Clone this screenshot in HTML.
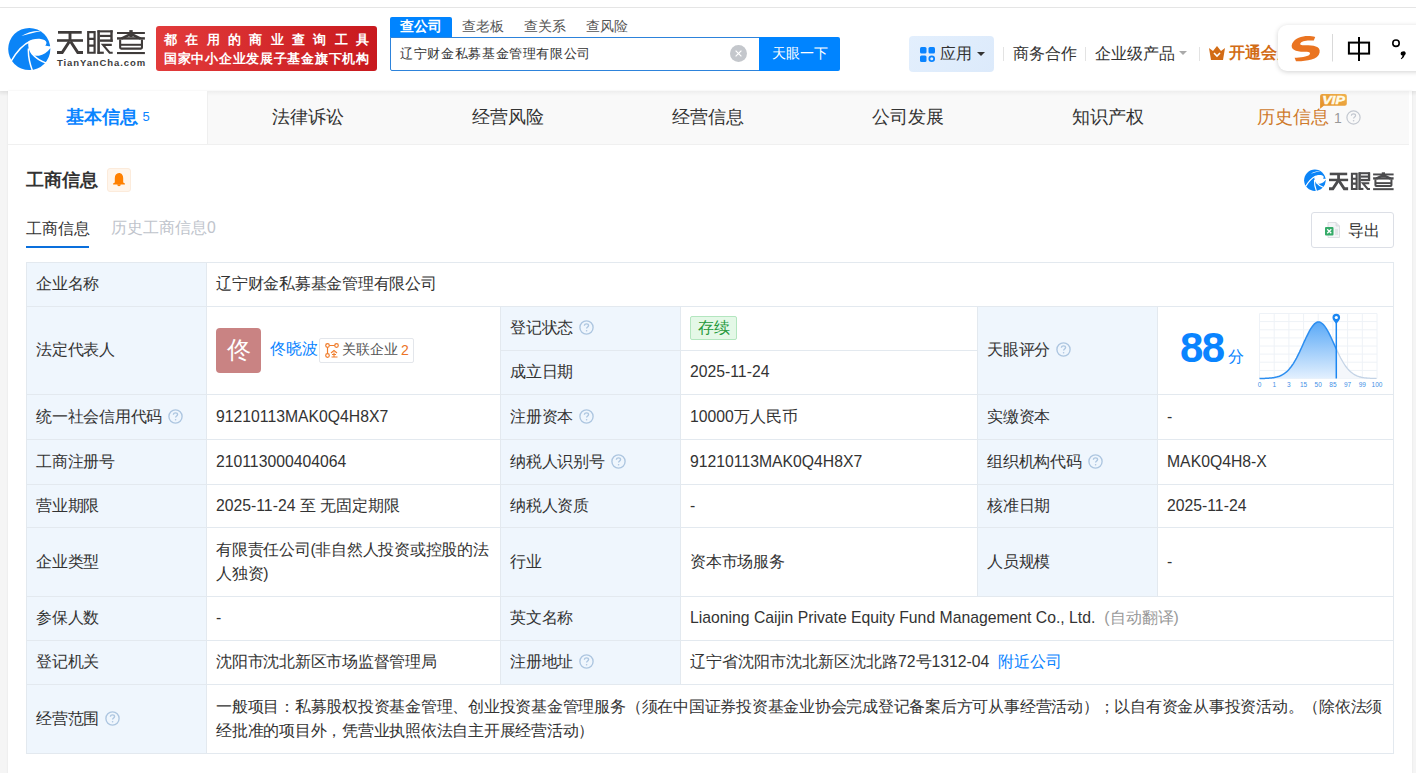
<!DOCTYPE html>
<html><head><meta charset="utf-8">
<style>
*{margin:0;padding:0;box-sizing:border-box}
html,body{width:1416px;height:773px;overflow:hidden;background:#f5f5f5;font-family:"Liberation Sans",sans-serif;color:#333}
.a{position:absolute;white-space:nowrap}
#top{position:absolute;left:0;top:0;width:1416px;height:7px;background:#fff}
#topline{position:absolute;left:0;top:7px;width:1416px;height:1px;background:#e6e6e6}
#hdr{position:absolute;left:0;top:8px;width:1416px;height:83px;background:#fff;box-shadow:0 2px 4px rgba(0,0,0,.05)}
#main{position:absolute;left:8px;top:91px;width:1404px;height:700px;background:#fff;box-shadow:0 0 2px rgba(0,0,0,.08)}
#tabs{position:absolute;left:8px;top:91px;width:1401px;height:54px;background:#f9f9f9;border-bottom:1px solid #f0f0f0}
.tab{position:absolute;top:91px;height:53px;width:200px;text-align:center;line-height:53px;font-size:18px;color:#333}
.q{display:inline-block;width:14px;height:14px;border:1.3px solid #bcd0e4;border-radius:50%;font-size:10px;line-height:11px;text-align:center;color:#bcd0e4;font-weight:bold;vertical-align:middle}
/* table */
.ln{position:absolute;background:#e3e9ef}
.lab{position:absolute;background:#eff6fd}
.t{position:absolute;font-size:15.75px;color:#333;white-space:nowrap;line-height:20px}
.c{position:absolute;display:flex;align-items:center;padding-left:9px;font-size:15.75px;color:#333;white-space:nowrap;line-height:24.5px}
.qi{display:inline-block;width:15px;height:15px;margin-left:6px;vertical-align:middle;position:relative;top:-1px}
</style></head><body>
<div id="top"></div><div id="topline"></div>
<div id="hdr"></div>
<div id="main"></div>
<div id="tabs"></div>
<div class="a" style="left:0;top:91px;width:1416px;height:5px;background:linear-gradient(rgba(0,0,0,.045),rgba(0,0,0,0))"></div>
<!-- HEADER -->
<svg class="a" style="left:8px;top:27px" width="43" height="44" viewBox="0 0 100 102"><circle cx="49.5" cy="51" r="49" fill="#0b84f7"/>
<path d="M47 34 C52 29 64 26.5 76 27.5 C84 28.5 90 32 89.5 37 C89.2 39.5 88 41.5 86.5 43 C90 44 95 45 106 45 L106 49 L98.5 49.5 C92 58 82 66 72 66.5 C64 67 58 65.5 55.5 63 C50 58 46.5 50 47 34 Z" fill="#fff"/>
<path d="M31 21 C44 13 60 8.5 76 9.5 C60 12.5 46 16.5 31 21Z" fill="#fff"/>
<path d="M7 80 C19 59 33 41 53 32.5" stroke="#fff" stroke-width="3.4" fill="none"/>
<path d="M47.5 50 C46.5 68 50 84 57 102" stroke="#fff" stroke-width="3.4" fill="none"/>
<path d="M55 61 C64 72 76 80 92 85" stroke="#fff" stroke-width="3.6" fill="none"/></svg>
<svg class="a" style="left:0;top:0" width="160" height="60" viewBox="0 0 160 60"><g fill="none" stroke="#3f3b3a" stroke-linejoin="miter">
<path d="M58 32.35H81.75" stroke-width="2.7"/>
<path d="M70 33V40" stroke-width="2.9"/>
<path d="M57 40.5H83" stroke-width="2.6"/>
<path d="M69.4 41.5L62.2 52.45H57" stroke-width="3"/>
<path d="M70.6 41.5L77.8 52.45H83" stroke-width="3"/>
<path d="M88.2 32.05H94.6V52.75H88.2Z" stroke-width="2.2"/>
<path d="M88.2 38.8H94.6M88.2 45.55H94.6" stroke-width="2.2"/>
<path d="M98.6 53.85V30.3" stroke-width="2.6"/>
<path d="M97.5 31.35H112.7" stroke-width="2.1"/>
<path d="M111.5 30.3V41.8" stroke-width="2.4"/>
<path d="M99.9 35.95H111.5" stroke-width="2.2"/>
<path d="M99.9 40.6H112.7" stroke-width="2.4"/>
<path d="M97.5 52.75H103.8" stroke-width="2.2"/>
<path d="M111.8 44.85H103L109.6 52.75H112.7" stroke-width="2.1"/>
<path d="M117 33H144.9" stroke-width="2"/>
<path d="M131 30.1V37" stroke-width="3.4"/>
<path d="M121.3 38.6L131 34L140.7 38.6" stroke-width="2.6"/>
<path d="M117 38.4H144.9" stroke-width="2.4"/>
<path d="M120.15 39.6V47.6Q120.15 48.65 121.2 48.65H140.9Q141.95 48.65 141.95 47.6V39.6" stroke-width="2.1"/>
<path d="M120.15 44.8H141.95" stroke-width="2"/>
<path d="M117 53.05H144.9" stroke-width="2.1"/>
</g></svg>
<div class="a" style="left:57px;top:57px;font-size:9.5px;font-weight:bold;color:#3d3d3d;letter-spacing:0.9px;line-height:12px">TianYanCha.com</div>
<div class="a" style="left:156px;top:26px;width:221px;height:45px;border-radius:3px;background:linear-gradient(90deg,#e23b3b,#c8191e)"></div>
<div class="a" style="left:164px;top:31px;font-size:13px;font-weight:bold;color:#fff;letter-spacing:8.35px;line-height:17px">都在用的商业查询工具</div>
<div class="a" style="left:164px;top:50px;font-size:13px;font-weight:bold;color:#fff;letter-spacing:0.72px;line-height:17px">国家中小企业发展子基金旗下机构</div>
<!-- search -->
<div class="a" style="left:390px;top:17px;width:62px;height:21px;background:#0084ff;border-radius:2px 2px 0 0"></div>
<div class="a" style="left:390px;top:16px;width:62px;height:20px;line-height:20px;text-align:center;font-size:14px;font-weight:bold;color:#fff">查公司</div>
<div class="a" style="left:462px;top:16px;line-height:20px;font-size:14px;color:#555">查老板</div>
<div class="a" style="left:524px;top:16px;line-height:20px;font-size:14px;color:#555">查关系</div>
<div class="a" style="left:586px;top:16px;line-height:20px;font-size:14px;color:#555">查风险</div>
<div class="a" style="left:390px;top:37px;width:370px;height:34px;border:1px solid #2d83db;border-radius:0 0 0 2px;background:#fff"></div>
<div class="a" style="left:400px;top:44px;line-height:20px;font-size:13px;letter-spacing:0.65px;color:#333">辽宁财金私募基金管理有限公司</div>
<svg class="a" style="left:729.5px;top:45px" width="17" height="17" viewBox="0 0 17 17"><circle cx="8.5" cy="8.5" r="8.5" fill="#c4c7cc"/><path d="M5.6 5.6L11.4 11.4M11.4 5.6L5.6 11.4" stroke="#fff" stroke-width="1.2"/></svg>
<div class="a" style="left:759px;top:37px;width:81px;height:34px;background:#0084ff;border-radius:0 2px 2px 0;color:#fff;font-size:14px;line-height:32px;text-align:center">天眼一下</div>
<!-- right nav -->
<div class="a" style="left:909px;top:36px;width:85px;height:36px;border-radius:4px;background:linear-gradient(135deg,#e3effd,#dceafb)"></div>
<svg class="a" style="left:919.5px;top:46.5px" width="16" height="16" viewBox="0 0 16 16"><rect x="0" y="0" width="6.5" height="6.5" rx="1.5" fill="#0a84ff"/><rect x="8.5" y="0" width="6.5" height="6.5" rx="1.5" fill="#0a84ff"/><rect x="0" y="8.5" width="6.5" height="6.5" rx="1.5" fill="#0a84ff"/><circle cx="11.75" cy="11.75" r="2.4" stroke="#0a84ff" stroke-width="1.8" fill="none"/></svg>
<div class="a" style="left:940px;top:44px;line-height:20px;font-size:16px;color:#333">应用</div>
<svg class="a" style="left:977px;top:52px" width="8" height="4" viewBox="0 0 8 4"><path d="M0 0H8L4 4Z" fill="#333"/></svg>
<div class="a" style="left:1003px;top:47px;width:1px;height:14px;background:#e3e3e3"></div>
<div class="a" style="left:1013px;top:44px;line-height:20px;font-size:15.75px;color:#333">商务合作</div>
<div class="a" style="left:1085px;top:47px;width:1px;height:14px;background:#e3e3e3"></div>
<div class="a" style="left:1095px;top:44px;line-height:20px;font-size:15.75px;color:#333">企业级产品</div>
<svg class="a" style="left:1179px;top:51px" width="8" height="4" viewBox="0 0 8 4"><path d="M0 0H8L4 4Z" fill="#aaa"/></svg>
<div class="a" style="left:1199px;top:47px;width:1px;height:14px;background:#e3e3e3"></div>
<svg class="a" style="left:1209px;top:46px" width="16" height="14" viewBox="0 0 16 14"><path d="M0 2L4 5L8 0L12 5L16 2L14 14H2Z" fill="#d26c16"/><path d="M5 7L8 10L11 7" stroke="#fff" stroke-width="1.6" fill="none"/></svg>
<div class="a" style="left:1229px;top:43px;line-height:20px;font-size:16px;font-weight:bold;color:#d26c16">开通会员</div>
<!-- IME -->
<div class="a" style="left:1278px;top:25px;width:160px;height:46px;border-radius:9px;background:#fff;box-shadow:0 1px 5px rgba(0,0,0,.18)"></div>
<svg class="a" style="left:1280px;top:26px" width="136" height="44" viewBox="1280 26 136 44">
<path d="M1314.5 12.5" fill="none"/>
<path d="M1315.2 37C1308 34.8 1296 35.8 1292.2 43.5C1289.8 49.2 1295.5 51.8 1304 51.8C1309 51.8 1311 52.5 1309.6 54.4C1307.2 57 1300 57.4 1294.6 57.7L1296 61.2C1305 61.4 1318.3 60.2 1319.6 52.5C1320.8 45.8 1313 45.2 1305.5 45.2C1300.5 45.2 1299.5 44.4 1300.6 42.9C1302.5 40.8 1308 40.4 1313.8 40.6Z" fill="#ea7421"/>
<path d="M1332.5 34V61.5" stroke="#d9d9d9" stroke-width="1"/>
<rect x="1348.9" y="42.6" width="20.2" height="11" stroke="#000" stroke-width="2" fill="none"/>
<path d="M1359 37V61" stroke="#000" stroke-width="2"/>
<circle cx="1396" cy="43.2" r="3.2" stroke="#000" stroke-width="1.6" fill="none"/>
<path d="M1402.8 51.5A2 2 0 1 1 1404.6 55.2C1404 57 1402.8 58.5 1401.2 59.3L1400.8 58.6C1401.8 57.8 1402.4 56.8 1402.5 55.6A2 2 0 0 1 1402.8 51.5Z" fill="#000"/>
</svg>

<!-- TABS -->
<div class="a" style="left:8px;top:91px;width:199px;height:53px;background:#fff"></div>
<div class="a" style="left:207px;top:91px;width:1px;height:53px;background:#efefef"></div>
<div class="tab a" style="left:8px;color:#0a84ff;font-weight:bold">基本信息<span style="font-size:13px;font-weight:normal;margin-left:4px;position:relative;top:-2px">5</span></div>
<div class="tab a" style="left:208px">法律诉讼</div>
<div class="tab a" style="left:408px">经营风险</div>
<div class="tab a" style="left:608px">经营信息</div>
<div class="tab a" style="left:808px">公司发展</div>
<div class="tab a" style="left:1008px">知识产权</div>
<div class="a" style="left:1257px;top:91px;height:53px;line-height:53px;font-size:18px;color:#cf7a2c">历史信息<span style="font-size:14px;color:#999;margin-left:5px">1</span></div>
<svg class="a" style="left:1346px;top:110px" width="15" height="15" viewBox="0 0 15 15"><circle cx="7.5" cy="7.5" r="6.6" stroke="#c3c8d0" stroke-width="1.2" fill="none"/><path d="M5.4 5.8C5.4 4.5 6.4 3.8 7.5 3.8C8.7 3.8 9.6 4.6 9.6 5.6C9.6 6.9 7.6 7.1 7.6 8.6" stroke="#c3c8d0" stroke-width="1.2" fill="none"/><circle cx="7.6" cy="10.8" r="0.8" fill="#c3c8d0"/></svg>
<svg class="a" style="left:1316px;top:92px" width="34" height="19" viewBox="1316 92 34 19"><defs><linearGradient id="vg" x1="0" y1="1" x2="1" y2="0"><stop offset="0" stop-color="#e48f22"/><stop offset="1" stop-color="#efb04e"/></linearGradient></defs><path d="M1322.2 94H1344.7A2.1 2.1 0 0 1 1346.8 96.1V103.7A2.1 2.1 0 0 1 1344.7 105.8H1323.8L1320.1 108.7V96.1A2.1 2.1 0 0 1 1322.2 94Z" fill="url(#vg)"/><text x="1322.2" y="104.2" textLength="22.6" lengthAdjust="spacingAndGlyphs" font-family="Liberation Sans" font-weight="bold" font-style="italic" font-size="11" fill="#fffbe8" stroke="#fffbe8" stroke-width="0.45">VIP</text></svg>
<!-- CONTENT -->
<div class="a" style="left:26px;top:168px;line-height:24px;font-size:18px;font-weight:bold;color:#333">工商信息</div>
<div class="a" style="left:107px;top:168px;width:24px;height:24px;border-radius:3px;background:#fff5eb;border:1px solid #fcebdb"></div>
<svg class="a" style="left:112px;top:172px" width="14" height="16" viewBox="0 0 14 16"><path d="M7 1C4.4 1 2.8 3.2 2.8 6.2V10.6L1.1 11.4V12.5H12.9V11.4L11.2 10.6V6.2C11.2 3.2 9.6 1 7 1Z" fill="#ff8000"/><path d="M5.2 12.3A1.8 1.9 0 0 0 8.8 12.3Z" fill="#ff8000"/></svg>
<div class="a" style="left:26px;top:219px;line-height:20px;font-size:15.75px;color:#333">工商信息</div>
<div class="a" style="left:26px;top:246px;width:63px;height:2px;background:#0a6fdc"></div>
<div class="a" style="left:111px;top:218px;line-height:20px;font-size:15.75px;color:#c0c4cc">历史工商信息0</div>
<svg class="a" style="left:1304px;top:169px" width="22" height="22.5" viewBox="0 0 100 102"><circle cx="49.5" cy="51" r="49" fill="#0b84f7"/>
<path d="M47 34 C52 29 64 26.5 76 27.5 C84 28.5 90 32 89.5 37 C89.2 39.5 88 41.5 86.5 43 C90 44 95 45 106 45 L106 49 L98.5 49.5 C92 58 82 66 72 66.5 C64 67 58 65.5 55.5 63 C50 58 46.5 50 47 34 Z" fill="#fff"/>
<path d="M31 21 C44 13 60 8.5 76 9.5 C60 12.5 46 16.5 31 21Z" fill="#fff"/>
<path d="M7 80 C19 59 33 41 53 32.5" stroke="#fff" stroke-width="5" fill="none"/>
<path d="M47.5 50 C46.5 68 50 84 57 102" stroke="#fff" stroke-width="5" fill="none"/>
<path d="M55 61 C64 72 76 80 92 85" stroke="#fff" stroke-width="5.2" fill="none"/></svg>
<svg class="a" style="left:0;top:0;overflow:visible" width="1416" height="200"><g transform="translate(1287.11 150.18) scale(0.735)"><g fill="none" stroke="#4b4b4d" stroke-linejoin="miter">
<path d="M58 32.35H81.75" stroke-width="3.51"/>
<path d="M70 33V40" stroke-width="3.77"/>
<path d="M57 40.5H83" stroke-width="3.38"/>
<path d="M69.4 41.5L62.2 52.45H57" stroke-width="3.90"/>
<path d="M70.6 41.5L77.8 52.45H83" stroke-width="3.90"/>
<path d="M88.2 32.05H94.6V52.75H88.2Z" stroke-width="2.86"/>
<path d="M88.2 38.8H94.6M88.2 45.55H94.6" stroke-width="2.86"/>
<path d="M98.6 53.85V30.3" stroke-width="3.38"/>
<path d="M97.5 31.35H112.7" stroke-width="2.73"/>
<path d="M111.5 30.3V41.8" stroke-width="3.12"/>
<path d="M99.9 35.95H111.5" stroke-width="2.86"/>
<path d="M99.9 40.6H112.7" stroke-width="3.12"/>
<path d="M97.5 52.75H103.8" stroke-width="2.86"/>
<path d="M111.8 44.85H103L109.6 52.75H112.7" stroke-width="2.73"/>
<path d="M117 33H144.9" stroke-width="2.60"/>
<path d="M131 30.1V37" stroke-width="4.42"/>
<path d="M121.3 38.6L131 34L140.7 38.6" stroke-width="3.38"/>
<path d="M117 38.4H144.9" stroke-width="3.12"/>
<path d="M120.15 39.6V47.6Q120.15 48.65 121.2 48.65H140.9Q141.95 48.65 141.95 47.6V39.6" stroke-width="2.73"/>
<path d="M120.15 44.8H141.95" stroke-width="2.60"/>
<path d="M117 53.05H144.9" stroke-width="2.73"/>
</g></g></svg>
<div class="a" style="left:1311px;top:212px;width:83px;height:36px;border:1px solid #dcdfe6;border-radius:3px;background:#fff"></div>
<svg class="a" style="left:1325px;top:222px" width="16" height="16" viewBox="0 0 16 16"><path d="M3 0.5H11L14.5 4V15.5H3Z" fill="#f4f5f7" stroke="#d5d8dd" stroke-width="0.8"/><path d="M11 0.5V4H14.5" fill="#e3e6ea" stroke="#d5d8dd" stroke-width="0.8"/><rect x="0" y="5" width="8.5" height="8.5" rx="1" fill="#35ab68"/><path d="M2.2 7.2L6.3 11.3M6.3 7.2L2.2 11.3" stroke="#fff" stroke-width="1.3"/><path d="M10 8H13M10 10H13M10 12H13" stroke="#c9ccd1" stroke-width="0.8"/></svg>
<div class="a" style="left:1348px;top:221px;line-height:20px;font-size:15.75px;color:#333">导出</div>
<div class="lab" style="left:26px;top:262px;width:180px;height:491px"></div>
<div class="lab" style="left:500px;top:306px;width:180px;height:378px"></div>
<div class="lab" style="left:977px;top:306px;width:180px;height:290px"></div>
<div class="ln" style="left:26px;top:262px;width:1368px;height:1px"></div>
<div class="ln" style="left:26px;top:306px;width:1368px;height:1px"></div>
<div class="ln" style="left:26px;top:394px;width:1368px;height:1px"></div>
<div class="ln" style="left:26px;top:439px;width:1368px;height:1px"></div>
<div class="ln" style="left:26px;top:484px;width:1368px;height:1px"></div>
<div class="ln" style="left:26px;top:527px;width:1368px;height:1px"></div>
<div class="ln" style="left:26px;top:596px;width:1368px;height:1px"></div>
<div class="ln" style="left:26px;top:640px;width:1368px;height:1px"></div>
<div class="ln" style="left:26px;top:684px;width:1368px;height:1px"></div>
<div class="ln" style="left:26px;top:753px;width:1368px;height:1px"></div>
<div class="ln" style="left:500px;top:350px;width:477px;height:1px"></div>
<div class="ln" style="left:26px;top:262px;width:1px;height:492px"></div>
<div class="ln" style="left:206px;top:262px;width:1px;height:492px"></div>
<div class="ln" style="left:1393px;top:262px;width:1px;height:492px"></div>
<div class="ln" style="left:500px;top:306px;width:1px;height:378px"></div>
<div class="ln" style="left:680px;top:306px;width:1px;height:378px"></div>
<div class="ln" style="left:977px;top:306px;width:1px;height:290px"></div>
<div class="ln" style="left:1157px;top:306px;width:1px;height:290px"></div>
<div class="c" style="left:27px;top:263px;width:179px;height:43px;letter-spacing:-0.25px">企业名称</div>
<div class="c" style="left:207px;top:263px;width:1186px;height:43px;letter-spacing:-0.25px">辽宁财金私募基金管理有限公司</div>
<div class="c" style="left:27px;top:307px;width:179px;height:87px;letter-spacing:-0.25px">法定代表人</div>
<div class="c" style="left:501px;top:307px;width:179px;height:43px;letter-spacing:-0.25px">登记状态<svg class="qi" viewBox="0 0 15 15"><circle cx="7.5" cy="7.5" r="6.6" stroke="#adc6e0" stroke-width="1.35" fill="none"/><path d="M5.4 5.8C5.4 4.5 6.4 3.8 7.5 3.8C8.7 3.8 9.6 4.6 9.6 5.6C9.6 6.9 7.6 7.1 7.6 8.6" stroke="#adc6e0" stroke-width="1.35" fill="none"/><circle cx="7.6" cy="10.8" r="0.8" fill="#adc6e0"/></svg></div>
<div class="c" style="left:501px;top:351px;width:179px;height:43px;letter-spacing:-0.25px">成立日期</div>
<div class="c" style="left:681px;top:351px;width:296px;height:43px;">2025-11-24</div>
<div class="c" style="left:978px;top:307px;width:179px;height:87px;letter-spacing:-0.25px">天眼评分<svg class="qi" viewBox="0 0 15 15"><circle cx="7.5" cy="7.5" r="6.6" stroke="#adc6e0" stroke-width="1.35" fill="none"/><path d="M5.4 5.8C5.4 4.5 6.4 3.8 7.5 3.8C8.7 3.8 9.6 4.6 9.6 5.6C9.6 6.9 7.6 7.1 7.6 8.6" stroke="#adc6e0" stroke-width="1.35" fill="none"/><circle cx="7.6" cy="10.8" r="0.8" fill="#adc6e0"/></svg></div>
<div class="c" style="left:27px;top:395px;width:179px;height:44px;letter-spacing:-0.25px">统一社会信用代码<svg class="qi" viewBox="0 0 15 15"><circle cx="7.5" cy="7.5" r="6.6" stroke="#adc6e0" stroke-width="1.35" fill="none"/><path d="M5.4 5.8C5.4 4.5 6.4 3.8 7.5 3.8C8.7 3.8 9.6 4.6 9.6 5.6C9.6 6.9 7.6 7.1 7.6 8.6" stroke="#adc6e0" stroke-width="1.35" fill="none"/><circle cx="7.6" cy="10.8" r="0.8" fill="#adc6e0"/></svg></div>
<div class="c" style="left:207px;top:395px;width:293px;height:44px;">91210113MAK0Q4H8X7</div>
<div class="c" style="left:501px;top:395px;width:179px;height:44px;letter-spacing:-0.25px">注册资本<svg class="qi" viewBox="0 0 15 15"><circle cx="7.5" cy="7.5" r="6.6" stroke="#adc6e0" stroke-width="1.35" fill="none"/><path d="M5.4 5.8C5.4 4.5 6.4 3.8 7.5 3.8C8.7 3.8 9.6 4.6 9.6 5.6C9.6 6.9 7.6 7.1 7.6 8.6" stroke="#adc6e0" stroke-width="1.35" fill="none"/><circle cx="7.6" cy="10.8" r="0.8" fill="#adc6e0"/></svg></div>
<div class="c" style="left:681px;top:395px;width:296px;height:44px;">10000万人民币</div>
<div class="c" style="left:978px;top:395px;width:179px;height:44px;letter-spacing:-0.25px">实缴资本</div>
<div class="c" style="left:1158px;top:395px;width:235px;height:44px;">-</div>
<div class="c" style="left:27px;top:440px;width:179px;height:44px;letter-spacing:-0.25px">工商注册号</div>
<div class="c" style="left:207px;top:440px;width:293px;height:44px;">210113000404064</div>
<div class="c" style="left:501px;top:440px;width:179px;height:44px;letter-spacing:-0.25px">纳税人识别号<svg class="qi" viewBox="0 0 15 15"><circle cx="7.5" cy="7.5" r="6.6" stroke="#adc6e0" stroke-width="1.35" fill="none"/><path d="M5.4 5.8C5.4 4.5 6.4 3.8 7.5 3.8C8.7 3.8 9.6 4.6 9.6 5.6C9.6 6.9 7.6 7.1 7.6 8.6" stroke="#adc6e0" stroke-width="1.35" fill="none"/><circle cx="7.6" cy="10.8" r="0.8" fill="#adc6e0"/></svg></div>
<div class="c" style="left:681px;top:440px;width:296px;height:44px;">91210113MAK0Q4H8X7</div>
<div class="c" style="left:978px;top:440px;width:179px;height:44px;letter-spacing:-0.25px">组织机构代码<svg class="qi" viewBox="0 0 15 15"><circle cx="7.5" cy="7.5" r="6.6" stroke="#adc6e0" stroke-width="1.35" fill="none"/><path d="M5.4 5.8C5.4 4.5 6.4 3.8 7.5 3.8C8.7 3.8 9.6 4.6 9.6 5.6C9.6 6.9 7.6 7.1 7.6 8.6" stroke="#adc6e0" stroke-width="1.35" fill="none"/><circle cx="7.6" cy="10.8" r="0.8" fill="#adc6e0"/></svg></div>
<div class="c" style="left:1158px;top:440px;width:235px;height:44px;">MAK0Q4H8-X</div>
<div class="c" style="left:27px;top:485px;width:179px;height:42px;letter-spacing:-0.25px">营业期限</div>
<div class="c" style="left:207px;top:485px;width:293px;height:42px;">2025-11-24 至 无固定期限</div>
<div class="c" style="left:501px;top:485px;width:179px;height:42px;letter-spacing:-0.25px">纳税人资质</div>
<div class="c" style="left:681px;top:485px;width:296px;height:42px;">-</div>
<div class="c" style="left:978px;top:485px;width:179px;height:42px;letter-spacing:-0.25px">核准日期</div>
<div class="c" style="left:1158px;top:485px;width:235px;height:42px;">2025-11-24</div>
<div class="c" style="left:27px;top:528px;width:179px;height:68px;letter-spacing:-0.25px">企业类型</div>
<div class="c" style="left:207px;top:528px;width:293px;height:68px;letter-spacing:-0.25px">有限责任公司(非自然人投资或控股的法<br>人独资)</div>
<div class="c" style="left:501px;top:528px;width:179px;height:68px;letter-spacing:-0.25px">行业</div>
<div class="c" style="left:681px;top:528px;width:296px;height:68px;letter-spacing:-0.25px">资本市场服务</div>
<div class="c" style="left:978px;top:528px;width:179px;height:68px;letter-spacing:-0.25px">人员规模</div>
<div class="c" style="left:1158px;top:528px;width:235px;height:68px;">-</div>
<div class="c" style="left:27px;top:597px;width:179px;height:43px;letter-spacing:-0.25px">参保人数</div>
<div class="c" style="left:207px;top:597px;width:293px;height:43px;">-</div>
<div class="c" style="left:501px;top:597px;width:179px;height:43px;letter-spacing:-0.25px">英文名称</div>
<div class="c" style="left:681px;top:597px;width:712px;height:43px;">Liaoning Caijin Private Equity Fund Management Co., Ltd.<span style="color:#999;margin-left:9px">(自动翻译)</span></div>
<div class="c" style="left:27px;top:641px;width:179px;height:43px;letter-spacing:-0.25px">登记机关</div>
<div class="c" style="left:207px;top:641px;width:293px;height:43px;letter-spacing:-0.25px">沈阳市沈北新区市场监督管理局</div>
<div class="c" style="left:501px;top:641px;width:179px;height:43px;letter-spacing:-0.25px">注册地址<svg class="qi" viewBox="0 0 15 15"><circle cx="7.5" cy="7.5" r="6.6" stroke="#adc6e0" stroke-width="1.35" fill="none"/><path d="M5.4 5.8C5.4 4.5 6.4 3.8 7.5 3.8C8.7 3.8 9.6 4.6 9.6 5.6C9.6 6.9 7.6 7.1 7.6 8.6" stroke="#adc6e0" stroke-width="1.35" fill="none"/><circle cx="7.6" cy="10.8" r="0.8" fill="#adc6e0"/></svg></div>
<div class="c" style="left:681px;top:641px;width:712px;height:43px;">辽宁省沈阳市沈北新区沈北路72号1312-04<span style="color:#0a84ff;margin-left:9px">附近公司</span></div>
<div class="c" style="left:27px;top:685px;width:179px;height:68px;letter-spacing:-0.25px">经营范围<svg class="qi" viewBox="0 0 15 15"><circle cx="7.5" cy="7.5" r="6.6" stroke="#adc6e0" stroke-width="1.35" fill="none"/><path d="M5.4 5.8C5.4 4.5 6.4 3.8 7.5 3.8C8.7 3.8 9.6 4.6 9.6 5.6C9.6 6.9 7.6 7.1 7.6 8.6" stroke="#adc6e0" stroke-width="1.35" fill="none"/><circle cx="7.6" cy="10.8" r="0.8" fill="#adc6e0"/></svg></div>
<div class="c" style="left:207px;top:685px;width:1186px;height:68px;letter-spacing:-0.24px"><div>一般项目：私募股权投资基金管理、创业投资基金管理服务（须在中国证券投资基金业协会完成登记备案后方可从事经营活动）；以自有资金从事投资活动。（除依法须<br>经批准的项目外，凭营业执照依法自主开展经营活动）</div></div>
<div class="a" style="left:216px;top:328px;width:45px;height:45px;border-radius:4px;background:#c98383;color:#fff;font-size:24px;line-height:44px;text-align:center">佟</div>
<div class="a" style="left:270px;top:339px;line-height:20px;font-size:15.75px;color:#0a84ff">佟晓波</div>
<div class="a" style="left:319px;top:338px;width:95px;height:25px;border:1px solid #e3e6eb;border-radius:2px;background:#fff"></div>
<svg class="a" style="left:325px;top:343px" width="14" height="15" viewBox="0 0 14 15"><circle cx="2.5" cy="2.5" r="1.8" stroke="#f07d2c" stroke-width="1.2" fill="none"/><circle cx="11.5" cy="2.5" r="1.8" stroke="#f07d2c" stroke-width="1.2" fill="none"/><circle cx="2.5" cy="12.5" r="1.8" stroke="#f07d2c" stroke-width="1.2" fill="none"/><path d="M4.3 2.5H9.7M2.5 4.3V10.7" stroke="#f07d2c" stroke-width="1.2"/><path d="M6 10L9 7.5L12 10M7 11.5H11M9 9.5V14M6.5 14H12.5" stroke="#f07d2c" stroke-width="1.1" fill="none"/></svg>
<div class="a" style="left:342px;top:340px;line-height:20px;font-size:13.5px;color:#555">关联企业</div>
<div class="a" style="left:401px;top:340px;line-height:20px;font-size:14px;color:#ec7326">2</div>
<div class="a" style="left:690px;top:316px;width:47px;height:24px;border:1px solid #b3e6bf;border-radius:2px;background:#e4f8e7;color:#279a3e;font-size:16px;line-height:22px;text-align:center">存续</div>
<div class="a" style="left:1180px;top:323px;line-height:50px;font-size:42px;font-weight:bold;letter-spacing:-1.5px;color:#0a84ff">88</div>
<div class="a" style="left:1228px;top:347px;line-height:20px;font-size:16px;color:#0a84ff">分</div>
<svg class="a" style="left:0;top:0" width="1416" height="400" viewBox="0 0 1416 400">
<defs><linearGradient id="bg1" x1="0" y1="0" x2="0" y2="1"><stop offset="0" stop-color="#5aa9f7"/><stop offset="1" stop-color="#e3f0fe"/></linearGradient></defs>
<path d="M1259.5 313.5V378.5" stroke="#eef2f7" stroke-width="1"/><path d="M1274.2 313.5V378.5" stroke="#eef2f7" stroke-width="1"/><path d="M1288.9 313.5V378.5" stroke="#eef2f7" stroke-width="1"/><path d="M1303.6 313.5V378.5" stroke="#eef2f7" stroke-width="1"/><path d="M1318.2 313.5V378.5" stroke="#eef2f7" stroke-width="1"/><path d="M1332.9 313.5V378.5" stroke="#eef2f7" stroke-width="1"/><path d="M1347.6 313.5V378.5" stroke="#eef2f7" stroke-width="1"/><path d="M1362.3 313.5V378.5" stroke="#eef2f7" stroke-width="1"/><path d="M1377.0 313.5V378.5" stroke="#eef2f7" stroke-width="1"/><path d="M1259.5 313.5H1377" stroke="#eef2f7" stroke-width="1"/><path d="M1259.5 321.6H1377" stroke="#eef2f7" stroke-width="1"/><path d="M1259.5 329.8H1377" stroke="#eef2f7" stroke-width="1"/><path d="M1259.5 337.9H1377" stroke="#eef2f7" stroke-width="1"/><path d="M1259.5 346.0H1377" stroke="#eef2f7" stroke-width="1"/><path d="M1259.5 354.1H1377" stroke="#eef2f7" stroke-width="1"/><path d="M1259.5 362.2H1377" stroke="#eef2f7" stroke-width="1"/><path d="M1259.5 370.4H1377" stroke="#eef2f7" stroke-width="1"/><path d="M1259.5 378.5H1377" stroke="#eef2f7" stroke-width="1"/>
<path d="M1336.3 349.1 L1336.5 349.5 L1337.5 351.6 L1338.5 353.7 L1339.5 355.7 L1340.5 357.7 L1341.5 359.5 L1342.5 361.3 L1343.5 363.0 L1344.5 364.5 L1345.5 366.0 L1346.5 367.3 L1347.5 368.6 L1348.5 369.7 L1349.5 370.8 L1350.5 371.7 L1351.5 372.6 L1352.5 373.3 L1353.5 374.0 L1354.5 374.6 L1355.5 375.2 L1356.5 375.7 L1357.5 376.1 L1358.5 376.4 L1359.5 376.8 L1360.5 377.0 L1361.5 377.3 L1362.5 377.5 L1363.5 377.6 L1364.5 377.8 L1365.5 377.9 L1366.5 378.0 L1367.5 378.1 L1368.5 378.2 L1369.5 378.2 L1370.5 378.3 L1371.5 378.3 L1372.5 378.4 L1373.5 378.4 L1374.5 378.4 L1375.5 378.4 L1376.5 378.4 L1377 378.5 L1336.3 378.5 Z" fill="#f4f7fb"/>
<path d="M1259.5 378.5 L1260.5 378.4 L1261.5 378.4 L1262.5 378.4 L1263.5 378.4 L1264.5 378.4 L1265.5 378.3 L1266.5 378.3 L1267.5 378.3 L1268.5 378.2 L1269.5 378.1 L1270.5 378.0 L1271.5 377.9 L1272.5 377.8 L1273.5 377.7 L1274.5 377.5 L1275.5 377.3 L1276.5 377.1 L1277.5 376.8 L1278.5 376.5 L1279.5 376.2 L1280.5 375.7 L1281.5 375.3 L1282.5 374.7 L1283.5 374.1 L1284.5 373.5 L1285.5 372.7 L1286.5 371.9 L1287.5 371.0 L1288.5 369.9 L1289.5 368.8 L1290.5 367.6 L1291.5 366.2 L1292.5 364.8 L1293.5 363.3 L1294.5 361.6 L1295.5 359.9 L1296.5 358.1 L1297.5 356.1 L1298.5 354.1 L1299.5 352.1 L1300.5 349.9 L1301.5 347.8 L1302.5 345.6 L1303.5 343.3 L1304.5 341.1 L1305.5 339.0 L1306.5 336.8 L1307.5 334.8 L1308.5 332.8 L1309.5 330.9 L1310.5 329.2 L1311.5 327.6 L1312.5 326.2 L1313.5 325.0 L1314.5 323.9 L1315.5 323.1 L1316.5 322.5 L1317.5 322.1 L1318.5 322.0 L1319.5 322.1 L1320.5 322.4 L1321.5 323.0 L1322.5 323.8 L1323.5 324.8 L1324.5 325.9 L1325.5 327.3 L1326.5 328.9 L1327.5 330.6 L1328.5 332.4 L1329.5 334.4 L1330.5 336.4 L1331.5 338.5 L1332.5 340.7 L1333.5 342.9 L1334.5 345.1 L1335.5 347.3 L1336.5 349.5 L1336.3 349.1 L1336.3 378.5 L1259.5 378.5 Z" fill="url(#bg1)"/>
<path d="M1336.3 349.1 L1336.5 349.5 L1337.5 351.6 L1338.5 353.7 L1339.5 355.7 L1340.5 357.7 L1341.5 359.5 L1342.5 361.3 L1343.5 363.0 L1344.5 364.5 L1345.5 366.0 L1346.5 367.3 L1347.5 368.6 L1348.5 369.7 L1349.5 370.8 L1350.5 371.7 L1351.5 372.6 L1352.5 373.3 L1353.5 374.0 L1354.5 374.6 L1355.5 375.2 L1356.5 375.7 L1357.5 376.1 L1358.5 376.4 L1359.5 376.8 L1360.5 377.0 L1361.5 377.3 L1362.5 377.5 L1363.5 377.6 L1364.5 377.8 L1365.5 377.9 L1366.5 378.0 L1367.5 378.1 L1368.5 378.2 L1369.5 378.2 L1370.5 378.3 L1371.5 378.3 L1372.5 378.4 L1373.5 378.4 L1374.5 378.4 L1375.5 378.4 L1376.5 378.4" stroke="#c3d3e6" stroke-width="1.3" fill="none"/>
<path d="M1259.5 378.5 L1260.5 378.4 L1261.5 378.4 L1262.5 378.4 L1263.5 378.4 L1264.5 378.4 L1265.5 378.3 L1266.5 378.3 L1267.5 378.3 L1268.5 378.2 L1269.5 378.1 L1270.5 378.0 L1271.5 377.9 L1272.5 377.8 L1273.5 377.7 L1274.5 377.5 L1275.5 377.3 L1276.5 377.1 L1277.5 376.8 L1278.5 376.5 L1279.5 376.2 L1280.5 375.7 L1281.5 375.3 L1282.5 374.7 L1283.5 374.1 L1284.5 373.5 L1285.5 372.7 L1286.5 371.9 L1287.5 371.0 L1288.5 369.9 L1289.5 368.8 L1290.5 367.6 L1291.5 366.2 L1292.5 364.8 L1293.5 363.3 L1294.5 361.6 L1295.5 359.9 L1296.5 358.1 L1297.5 356.1 L1298.5 354.1 L1299.5 352.1 L1300.5 349.9 L1301.5 347.8 L1302.5 345.6 L1303.5 343.3 L1304.5 341.1 L1305.5 339.0 L1306.5 336.8 L1307.5 334.8 L1308.5 332.8 L1309.5 330.9 L1310.5 329.2 L1311.5 327.6 L1312.5 326.2 L1313.5 325.0 L1314.5 323.9 L1315.5 323.1 L1316.5 322.5 L1317.5 322.1 L1318.5 322.0 L1319.5 322.1 L1320.5 322.4 L1321.5 323.0 L1322.5 323.8 L1323.5 324.8 L1324.5 325.9 L1325.5 327.3 L1326.5 328.9 L1327.5 330.6 L1328.5 332.4 L1329.5 334.4 L1330.5 336.4 L1331.5 338.5 L1332.5 340.7 L1333.5 342.9 L1334.5 345.1 L1335.5 347.3 L1336.5 349.5 L1336.3 349.1" stroke="#2d8ef0" stroke-width="1.5" fill="none"/>
<path d="M1336.3 320V378.5" stroke="#1a86f2" stroke-width="1.5"/>
<path d="M1336.3 324 C1334 321 1332.5 319.5 1332.5 317.5 A3.8 3.8 0 0 1 1340.1 317.5 C1340.1 319.5 1338.6 321 1336.3 324Z" fill="#1a86f2"/>
<circle cx="1336.3" cy="317.5" r="1.6" fill="#fff"/>
<text x="1259.5" y="386.5" text-anchor="middle" font-family="Liberation Sans" font-size="6.5" fill="#3f8fe6">0</text><text x="1274.2" y="386.5" text-anchor="middle" font-family="Liberation Sans" font-size="6.5" fill="#3f8fe6">1</text><text x="1288.9" y="386.5" text-anchor="middle" font-family="Liberation Sans" font-size="6.5" fill="#3f8fe6">3</text><text x="1303.6" y="386.5" text-anchor="middle" font-family="Liberation Sans" font-size="6.5" fill="#3f8fe6">15</text><text x="1318.2" y="386.5" text-anchor="middle" font-family="Liberation Sans" font-size="6.5" fill="#3f8fe6">50</text><text x="1332.9" y="386.5" text-anchor="middle" font-family="Liberation Sans" font-size="6.5" fill="#3f8fe6">85</text><text x="1347.6" y="386.5" text-anchor="middle" font-family="Liberation Sans" font-size="6.5" fill="#3f8fe6">97</text><text x="1362.3" y="386.5" text-anchor="middle" font-family="Liberation Sans" font-size="6.5" fill="#3f8fe6">99</text><text x="1377.0" y="386.5" text-anchor="middle" font-family="Liberation Sans" font-size="6.5" fill="#3f8fe6">100</text></svg>
</body></html>
